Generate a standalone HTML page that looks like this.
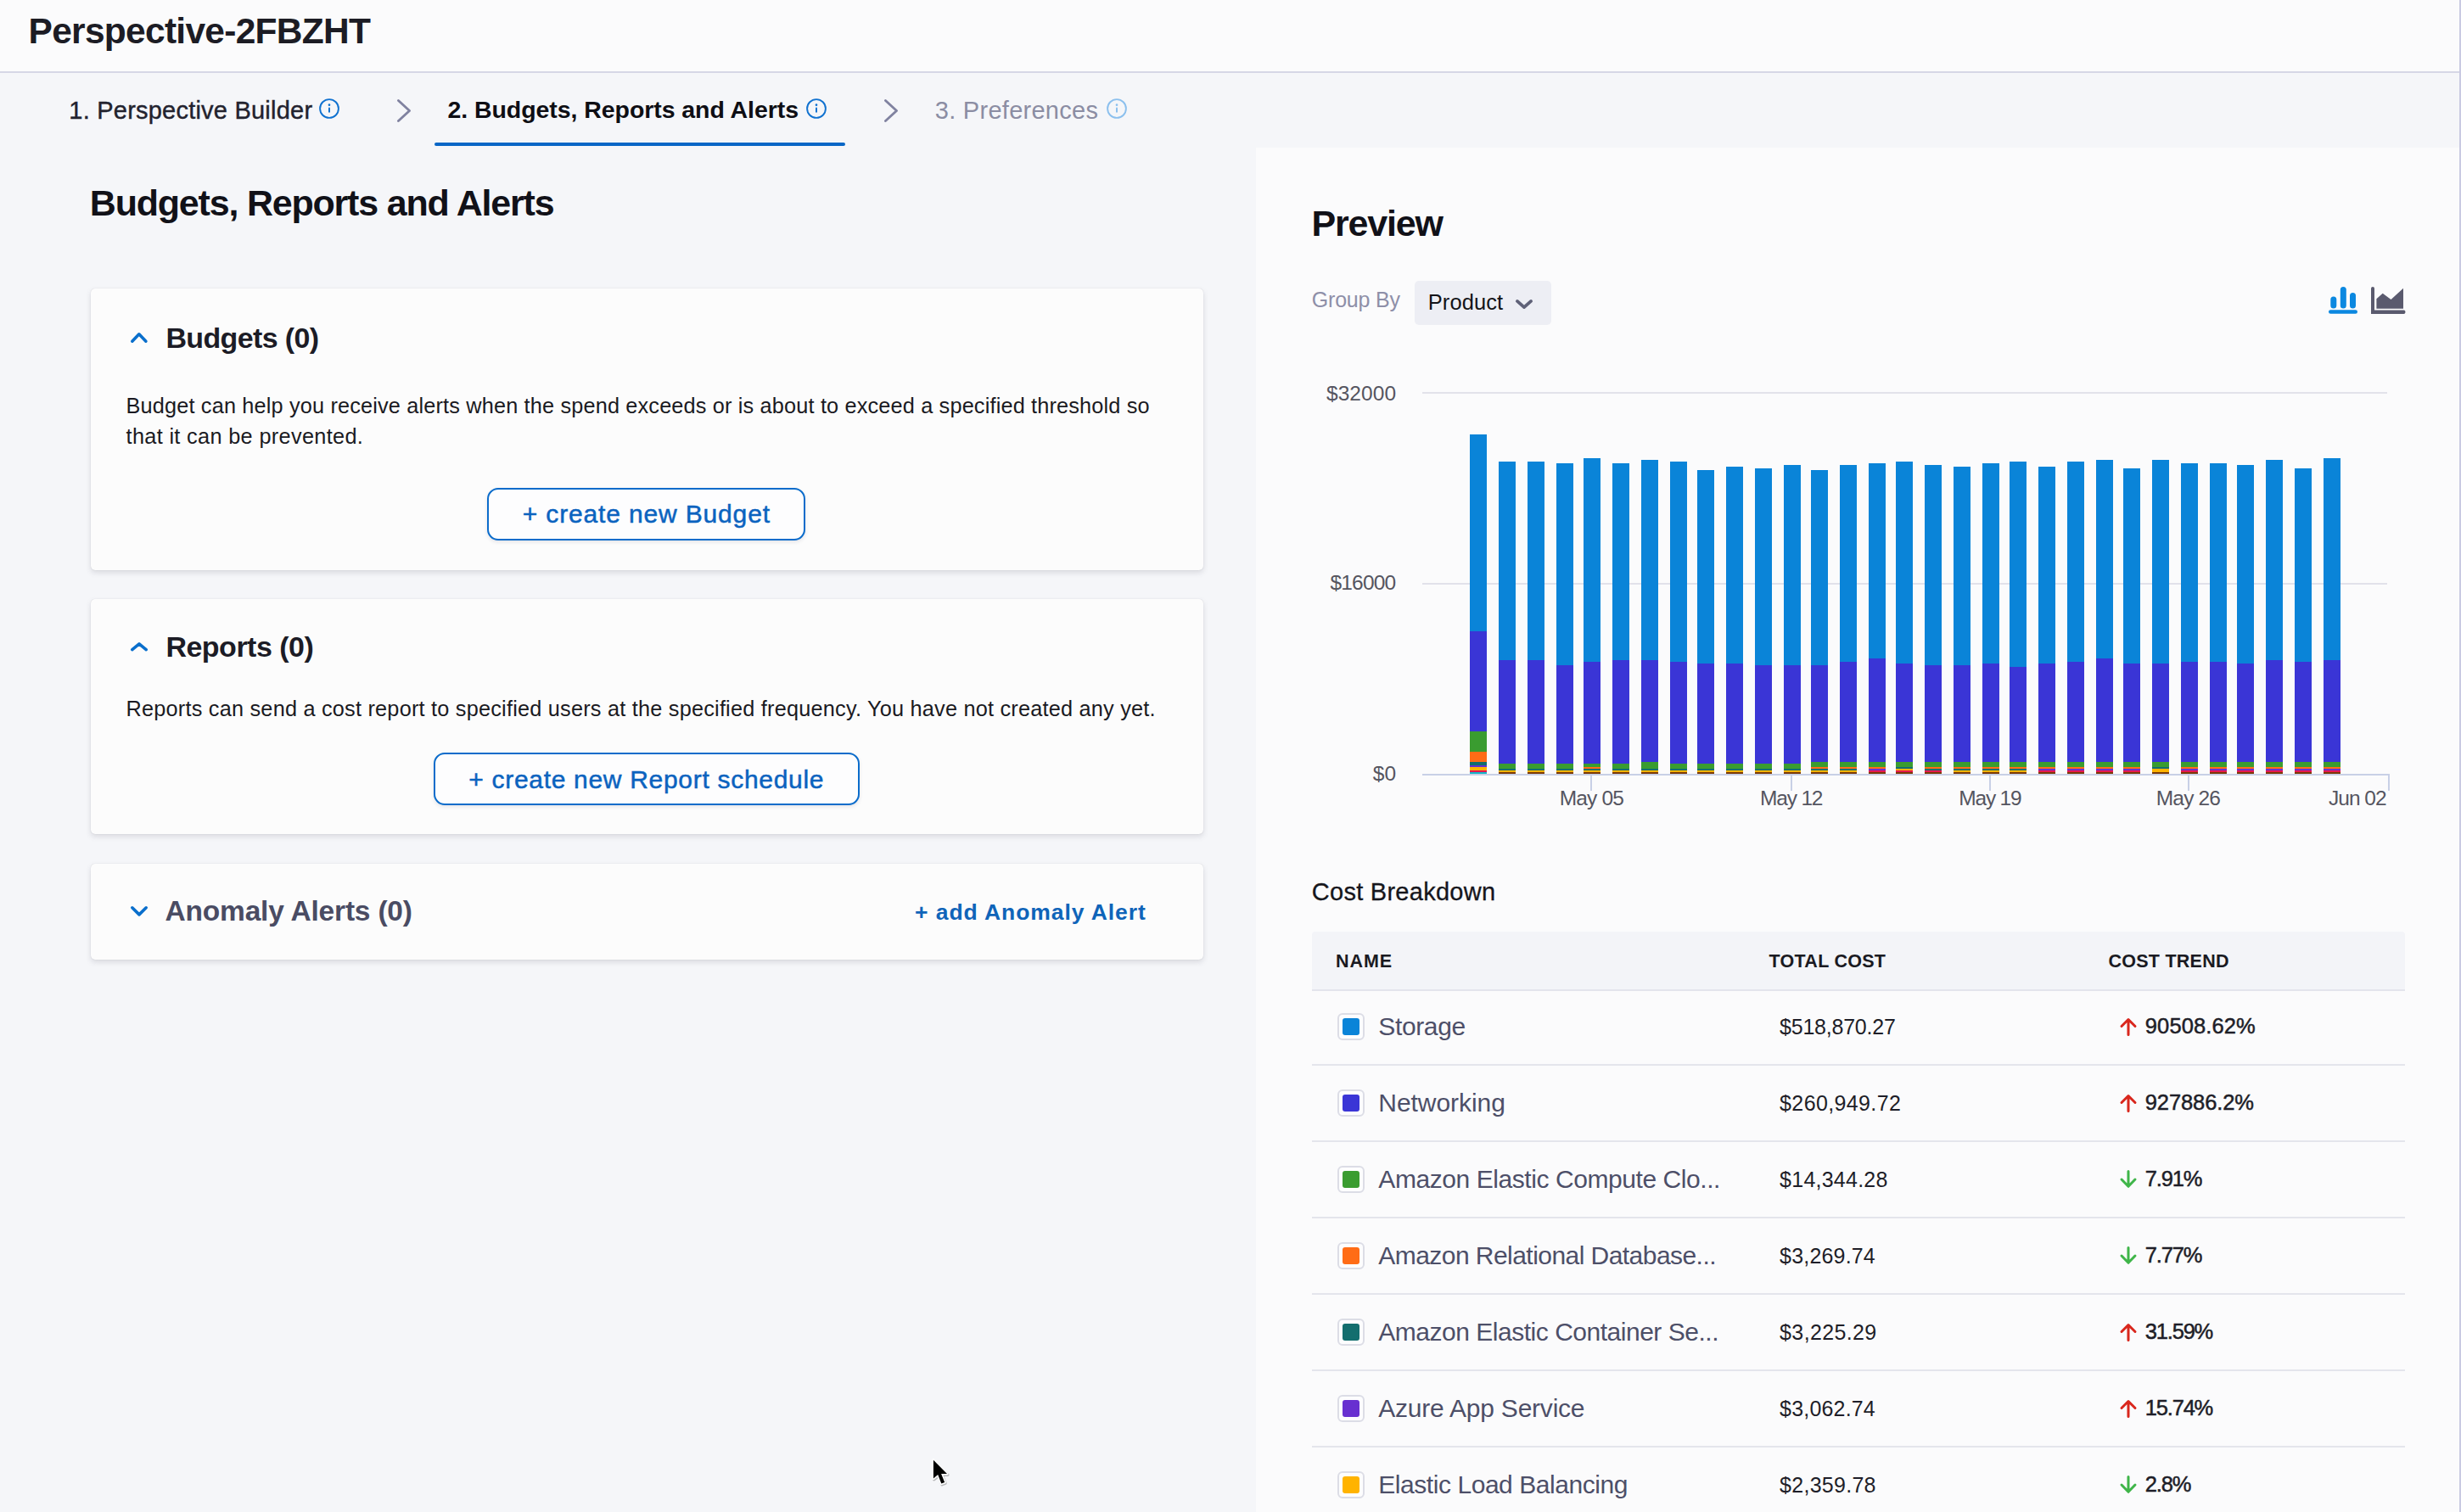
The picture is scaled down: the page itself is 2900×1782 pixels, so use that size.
<!DOCTYPE html>
<html><head><meta charset="utf-8"><title>Perspective</title>
<style>
html,body{margin:0;padding:0;}
body{width:2900px;height:1782px;overflow:hidden;position:relative;background:#f5f6f9;font-family:"Liberation Sans",sans-serif;}
.t{position:absolute;white-space:nowrap;}
.r{position:absolute;}
svg.r{overflow:visible;}
</style></head><body>
<div class="r" style="left:0px;top:0px;width:2900px;height:84px;background:#fbfbfc;"></div>
<div class="r" style="left:0px;top:84px;width:2900px;height:2px;background:#d6d7e6;"></div>
<div class="r" style="left:1480px;top:174px;width:1418px;height:1608px;background:#fbfbfc;"></div>
<div class="r" style="left:2898px;top:0px;width:2px;height:1782px;background:#c9cae2;"></div>
<div class="t" style="left:33.50px;top:9.37px;font-size:42.5px;line-height:55px;font-weight:700;color:#1c1c24;letter-spacing:-0.715px;">Perspective-2FBZHT</div>
<div class="t" style="left:81.30px;top:110.95px;font-size:29px;line-height:38px;color:#22222e;letter-spacing:0.223px;-webkit-text-stroke:0.4px #22222e;">1. Perspective Builder</div>
<div class="t" style="left:527.50px;top:111.42px;font-size:28.5px;line-height:37px;font-weight:700;color:#0e0e14;letter-spacing:-0.065px;">2. Budgets, Reports and Alerts</div>
<div class="t" style="left:1101.80px;top:110.95px;font-size:29px;line-height:38px;color:#8b8da3;letter-spacing:0.273px;">3. Preferences</div>
<svg class="r" style="left:375px;top:115px" width="26" height="26" viewBox="0 0 26 26"><circle cx="13" cy="13" r="10.9" fill="none" stroke="#1172d0" stroke-width="1.9"/><circle cx="13" cy="8.7" r="1.35" fill="#1172d0"/><rect x="12" y="11.6" width="2" height="6.2" rx="1" fill="#1172d0"/></svg>
<svg class="r" style="left:949px;top:115px" width="26" height="26" viewBox="0 0 26 26"><circle cx="13" cy="13" r="10.9" fill="none" stroke="#1172d0" stroke-width="1.9"/><circle cx="13" cy="8.7" r="1.35" fill="#1172d0"/><rect x="12" y="11.6" width="2" height="6.2" rx="1" fill="#1172d0"/></svg>
<svg class="r" style="left:1303px;top:115px" width="26" height="26" viewBox="0 0 26 26"><circle cx="13" cy="13" r="10.9" fill="none" stroke="#8cc0ee" stroke-width="1.9"/><circle cx="13" cy="8.7" r="1.35" fill="#8cc0ee"/><rect x="12" y="11.6" width="2" height="6.2" rx="1" fill="#8cc0ee"/></svg>
<svg class="r" style="left:464px;top:112.5px" width="24" height="35.0" viewBox="0 0 24 35.0"><polyline points="5.45,5.45 18.55,17.5 5.45,29.55" fill="none" stroke="#8082a0" stroke-width="2.9" stroke-linecap="round" stroke-linejoin="round"/></svg>
<svg class="r" style="left:1038px;top:112.5px" width="24" height="35.0" viewBox="0 0 24 35.0"><polyline points="5.45,5.45 18.55,17.5 5.45,29.55" fill="none" stroke="#8082a0" stroke-width="2.9" stroke-linecap="round" stroke-linejoin="round"/></svg>
<div class="r" style="left:512px;top:168px;width:484px;height:4px;background:#0866c6;border-radius:2px;"></div>
<div class="t" style="left:105.80px;top:210.79px;font-size:43px;line-height:56px;font-weight:700;color:#111118;letter-spacing:-1.200px;">Budgets, Reports and Alerts</div>
<div class="r" style="left:107px;top:340px;width:1311px;height:332px;background:#fcfcfc;border-radius:5px;box-shadow:0 0 1px rgba(40,41,61,0.2),0 3px 6px rgba(96,97,112,0.18);"></div>
<div class="r" style="left:107px;top:706px;width:1311px;height:277px;background:#fcfcfc;border-radius:5px;box-shadow:0 0 1px rgba(40,41,61,0.2),0 3px 6px rgba(96,97,112,0.18);"></div>
<div class="r" style="left:107px;top:1018px;width:1311px;height:113px;background:#fcfcfc;border-radius:5px;box-shadow:0 0 1px rgba(40,41,61,0.2),0 3px 6px rgba(96,97,112,0.18);"></div>
<svg class="r" style="left:150.3px;top:388px" width="27.69999999999999" height="20" viewBox="0 0 27.69999999999999 20"><polyline points="5.8,14.2 13.849999999999994,5.8 21.899999999999988,14.2" fill="none" stroke="#0a6fcc" stroke-width="3.6" stroke-linecap="round" stroke-linejoin="round"/></svg>
<div class="t" style="left:195.40px;top:376.11px;font-size:34px;line-height:44px;font-weight:700;color:#1c1c26;letter-spacing:-0.630px;">Budgets (0)</div>
<div class="t" style="left:148.55px;top:462.33px;font-size:25.3px;line-height:33px;color:#1a1a22;letter-spacing:0.159px;">Budget can help you receive alerts when the spend exceeds or is about to exceed a specified threshold so</div>
<div class="t" style="left:148.55px;top:498.13px;font-size:25.3px;line-height:33px;color:#1a1a22;letter-spacing:0.33px;">that it can be prevented.</div>
<div class="r" style="left:574px;top:575px;width:375px;height:62px;background:#fdfdfe;box-sizing:border-box;border:2px solid #0b6ccb;border-radius:13px;box-shadow:0 2px 4px rgba(60,60,90,0.12);"></div>
<div class="t" style="left:615.80px;top:586.10px;font-size:30px;line-height:39px;color:#0b63bf;letter-spacing:0.844px;-webkit-text-stroke:0.5px #0b63bf;">+ create new Budget</div>
<svg class="r" style="left:150px;top:753px" width="28" height="18.5" viewBox="0 0 28 18.5"><polyline points="5.8,12.7 14.0,5.8 22.2,12.7" fill="none" stroke="#0a6fcc" stroke-width="3.6" stroke-linecap="round" stroke-linejoin="round"/></svg>
<div class="t" style="left:195.40px;top:739.81px;font-size:34px;line-height:44px;font-weight:700;color:#1c1c26;letter-spacing:-0.502px;">Reports (0)</div>
<div class="t" style="left:148.55px;top:818.73px;font-size:25.3px;line-height:33px;color:#1a1a22;letter-spacing:0.212px;">Reports can send a cost report to specified users at the specified frequency. You have not created any yet.</div>
<div class="r" style="left:511px;top:887px;width:502px;height:62px;background:#fdfdfe;box-sizing:border-box;border:2px solid #0b6ccb;border-radius:13px;box-shadow:0 2px 4px rgba(60,60,90,0.12);"></div>
<div class="t" style="left:552.30px;top:899.10px;font-size:30px;line-height:39px;color:#0b63bf;letter-spacing:0.694px;-webkit-text-stroke:0.5px #0b63bf;">+ create new Report schedule</div>
<svg class="r" style="left:150px;top:1064.3px" width="28" height="19.700000000000045" viewBox="0 0 28 19.700000000000045"><polyline points="5.8,5.8 14.0,13.900000000000045 22.2,5.8" fill="none" stroke="#0a6fcc" stroke-width="3.6" stroke-linecap="round" stroke-linejoin="round"/></svg>
<div class="t" style="left:194.50px;top:1051.89px;font-size:33.5px;line-height:44px;font-weight:700;color:#4a4c63;letter-spacing:-0.194px;">Anomaly Alerts (0)</div>
<div class="t" style="left:1078.10px;top:1057.71px;font-size:26.5px;line-height:34px;font-weight:700;color:#0f64b9;letter-spacing:0.930px;">+ add Anomaly Alert</div>
<div class="t" style="left:1545.50px;top:234.89px;font-size:43px;line-height:56px;font-weight:700;color:#111118;letter-spacing:-1.200px;">Preview</div>
<div class="t" style="left:1545.80px;top:337.03px;font-size:25px;line-height:32px;color:#8e8fa8;letter-spacing:-0.204px;">Group By</div>
<div class="r" style="left:1667px;top:331px;width:161px;height:52px;background:#edeef4;border-radius:5px;"></div>
<div class="t" style="left:1682.80px;top:340.26px;font-size:25.5px;line-height:33px;color:#141418;letter-spacing:0.059px;">Product</div>
<svg class="r" style="left:1782px;top:348.5px" width="28" height="19.0" viewBox="0 0 28 19.0"><polyline points="5.9,5.9 14.0,13.1 22.1,5.9" fill="none" stroke="#5f6178" stroke-width="3.8" stroke-linecap="round" stroke-linejoin="round"/></svg>
<svg class="r" style="left:2740px;top:334px" width="100" height="40" viewBox="2740 334 100 40"><rect x="2746.3" y="349.4" width="7" height="14" rx="3.5" fill="#0b88e0"/><rect x="2757.8" y="338" width="7" height="25.4" rx="3.5" fill="#0b88e0"/><rect x="2769" y="345" width="7" height="18.4" rx="3.5" fill="#0b88e0"/><rect x="2744" y="365.2" width="34" height="4.6" rx="2.3" fill="#0b88e0"/><path d="M2794 340 Q2794 338 2796 338 Q2798 338 2798 340 L2798 365.6 L2832.5 365.6 Q2834.5 365.6 2834.5 367.8 Q2834.5 370 2832.5 370 L2794 370 Z" fill="#5a5a6e"/><path d="M2800.4 352.3 L2807.7 345.8 L2817.5 353 L2832 339.7 L2832 363.7 L2800.4 363.7 Z" fill="#5a5a6e"/></svg>
<div class="t" style="left:1563.00px;top:447.51px;font-size:24.5px;line-height:32px;color:#555560;letter-spacing:0.059px;">$32000</div>
<div class="t" style="left:1567.60px;top:671.41px;font-size:24.5px;line-height:32px;color:#555560;letter-spacing:-0.861px;">$16000</div>
<div class="t" style="left:1617.81px;top:895.51px;font-size:24.5px;line-height:32px;color:#555560;">$0</div>
<div class="r" style="left:1676px;top:462px;width:1137px;height:2px;background:#e2e2ea;"></div>
<div class="r" style="left:1676px;top:687px;width:1137px;height:2px;background:#e2e2ea;"></div>
<div class="r" style="left:1676px;top:912px;width:1140px;height:2px;background:#c8d0e6;"></div>
<div class="r" style="left:1874px;top:914px;width:2px;height:18px;background:#c8d0e6;"></div>
<div class="r" style="left:2110px;top:914px;width:2px;height:18px;background:#c8d0e6;"></div>
<div class="r" style="left:2344px;top:914px;width:2px;height:18px;background:#c8d0e6;"></div>
<div class="r" style="left:2578px;top:914px;width:2px;height:18px;background:#c8d0e6;"></div>
<div class="r" style="left:2814px;top:914px;width:2px;height:18px;background:#c8d0e6;"></div>
<div class="t" style="left:1837.70px;top:925.11px;font-size:24.5px;line-height:32px;color:#555560;letter-spacing:-0.832px;">May 05</div>
<div class="t" style="left:2074.10px;top:925.11px;font-size:24.5px;line-height:32px;color:#555560;letter-spacing:-1.200px;">May 12</div>
<div class="t" style="left:2308.30px;top:925.11px;font-size:24.5px;line-height:32px;color:#555560;letter-spacing:-1.200px;">May 19</div>
<div class="t" style="left:2540.80px;top:925.11px;font-size:24.5px;line-height:32px;color:#555560;letter-spacing:-0.832px;">May 26</div>
<div class="t" style="left:2744.00px;top:925.11px;font-size:24.5px;line-height:32px;color:#555560;letter-spacing:-0.984px;">Jun 02</div>
<svg class="r" style="left:1700px;top:500px" width="1100" height="420" viewBox="1700 500 1100 420" shape-rendering="crispEdges"><rect x="1732.0" y="511.8" width="20" height="232.2" fill="#0a84d8"/><rect x="1732.0" y="744.0" width="20" height="117.8" fill="#3a35d6"/><rect x="1732.0" y="861.8" width="20" height="24.2" fill="#3a9c30"/><rect x="1732.0" y="886.0" width="20" height="12.0" fill="#ff6c16"/><rect x="1732.0" y="898.0" width="20" height="4.0" fill="#136e6e"/><rect x="1732.0" y="902.0" width="20" height="2.0" fill="#6830d0"/><rect x="1732.0" y="904.0" width="20" height="4.0" fill="#ffb300"/><rect x="1732.0" y="908.0" width="20" height="2.0" fill="#e6184e"/><rect x="1732.0" y="910.0" width="20" height="2.0" fill="#15b5c8"/><rect x="1766.0" y="543.8" width="20" height="234.4" fill="#0a84d8"/><rect x="1766.0" y="778.2" width="20" height="121.3" fill="#3a35d6"/><rect x="1766.0" y="899.5" width="20" height="6.0" fill="#3a9c30"/><rect x="1766.0" y="905.5" width="20" height="2.0" fill="#136e6e"/><rect x="1766.0" y="907.5" width="20" height="2.3" fill="#ffb300"/><rect x="1766.0" y="909.8" width="20" height="2.2" fill="#7a3a08"/><rect x="1800.0" y="543.8" width="20" height="234.4" fill="#0a84d8"/><rect x="1800.0" y="778.2" width="20" height="121.3" fill="#3a35d6"/><rect x="1800.0" y="899.5" width="20" height="6.0" fill="#3a9c30"/><rect x="1800.0" y="905.5" width="20" height="2.0" fill="#136e6e"/><rect x="1800.0" y="907.5" width="20" height="2.3" fill="#ffb300"/><rect x="1800.0" y="909.8" width="20" height="2.2" fill="#7a3a08"/><rect x="1834.0" y="546.0" width="20" height="237.8" fill="#0a84d8"/><rect x="1834.0" y="783.8" width="20" height="115.7" fill="#3a35d6"/><rect x="1834.0" y="899.5" width="20" height="6.0" fill="#3a9c30"/><rect x="1834.0" y="905.5" width="20" height="2.0" fill="#136e6e"/><rect x="1834.0" y="907.5" width="20" height="2.3" fill="#ffb300"/><rect x="1834.0" y="909.8" width="20" height="2.2" fill="#7a3a08"/><rect x="1866.0" y="539.7" width="20" height="240.3" fill="#0a84d8"/><rect x="1866.0" y="780.0" width="20" height="119.5" fill="#3a35d6"/><rect x="1866.0" y="899.5" width="20" height="4.5" fill="#3a9c30"/><rect x="1866.0" y="904.0" width="20" height="1.5" fill="#ff6c16"/><rect x="1866.0" y="905.5" width="20" height="2.0" fill="#136e6e"/><rect x="1866.0" y="907.5" width="20" height="2.3" fill="#ffb300"/><rect x="1866.0" y="909.8" width="20" height="2.2" fill="#7a3a08"/><rect x="1900.0" y="546.0" width="20" height="232.2" fill="#0a84d8"/><rect x="1900.0" y="778.2" width="20" height="121.3" fill="#3a35d6"/><rect x="1900.0" y="899.5" width="20" height="6.0" fill="#3a9c30"/><rect x="1900.0" y="905.5" width="20" height="2.0" fill="#136e6e"/><rect x="1900.0" y="907.5" width="20" height="2.3" fill="#ffb300"/><rect x="1900.0" y="909.8" width="20" height="2.2" fill="#7a3a08"/><rect x="1934.0" y="541.9" width="20" height="236.3" fill="#0a84d8"/><rect x="1934.0" y="778.2" width="20" height="119.8" fill="#3a35d6"/><rect x="1934.0" y="898.0" width="20" height="7.5" fill="#3a9c30"/><rect x="1934.0" y="905.5" width="20" height="2.0" fill="#136e6e"/><rect x="1934.0" y="907.5" width="20" height="2.3" fill="#ffb300"/><rect x="1934.0" y="909.8" width="20" height="2.2" fill="#7a3a08"/><rect x="1968.0" y="543.8" width="20" height="236.2" fill="#0a84d8"/><rect x="1968.0" y="780.0" width="20" height="119.5" fill="#3a35d6"/><rect x="1968.0" y="899.5" width="20" height="6.0" fill="#3a9c30"/><rect x="1968.0" y="905.5" width="20" height="2.0" fill="#136e6e"/><rect x="1968.0" y="907.5" width="20" height="2.3" fill="#ffb300"/><rect x="1968.0" y="909.8" width="20" height="2.2" fill="#7a3a08"/><rect x="2000.0" y="554.0" width="20" height="228.2" fill="#0a84d8"/><rect x="2000.0" y="782.2" width="20" height="117.3" fill="#3a35d6"/><rect x="2000.0" y="899.5" width="20" height="6.0" fill="#3a9c30"/><rect x="2000.0" y="905.5" width="20" height="2.0" fill="#136e6e"/><rect x="2000.0" y="907.5" width="20" height="2.3" fill="#ffb300"/><rect x="2000.0" y="909.8" width="20" height="2.2" fill="#7a3a08"/><rect x="2034.0" y="550.0" width="20" height="232.2" fill="#0a84d8"/><rect x="2034.0" y="782.2" width="20" height="117.3" fill="#3a35d6"/><rect x="2034.0" y="899.5" width="20" height="6.0" fill="#3a9c30"/><rect x="2034.0" y="905.5" width="20" height="2.0" fill="#136e6e"/><rect x="2034.0" y="907.5" width="20" height="2.3" fill="#ffb300"/><rect x="2034.0" y="909.8" width="20" height="2.2" fill="#7a3a08"/><rect x="2068.0" y="551.9" width="20" height="231.9" fill="#0a84d8"/><rect x="2068.0" y="783.8" width="20" height="115.7" fill="#3a35d6"/><rect x="2068.0" y="899.5" width="20" height="6.0" fill="#3a9c30"/><rect x="2068.0" y="905.5" width="20" height="2.0" fill="#136e6e"/><rect x="2068.0" y="907.5" width="20" height="2.3" fill="#ffb300"/><rect x="2068.0" y="909.8" width="20" height="2.2" fill="#7a3a08"/><rect x="2102.0" y="547.8" width="20" height="236.0" fill="#0a84d8"/><rect x="2102.0" y="783.8" width="20" height="115.7" fill="#3a35d6"/><rect x="2102.0" y="899.5" width="20" height="6.0" fill="#3a9c30"/><rect x="2102.0" y="905.5" width="20" height="2.0" fill="#136e6e"/><rect x="2102.0" y="907.5" width="20" height="2.3" fill="#ffb300"/><rect x="2102.0" y="909.8" width="20" height="2.2" fill="#7a3a08"/><rect x="2134.0" y="554.0" width="20" height="229.8" fill="#0a84d8"/><rect x="2134.0" y="783.8" width="20" height="114.2" fill="#3a35d6"/><rect x="2134.0" y="898.0" width="20" height="6.0" fill="#3a9c30"/><rect x="2134.0" y="904.0" width="20" height="2.0" fill="#ff6c16"/><rect x="2134.0" y="906.0" width="20" height="2.0" fill="#136e6e"/><rect x="2134.0" y="908.0" width="20" height="2.0" fill="#ffb300"/><rect x="2134.0" y="910.0" width="20" height="2.0" fill="#7a3a08"/><rect x="2168.0" y="547.8" width="20" height="232.2" fill="#0a84d8"/><rect x="2168.0" y="780.0" width="20" height="118.0" fill="#3a35d6"/><rect x="2168.0" y="898.0" width="20" height="6.0" fill="#3a9c30"/><rect x="2168.0" y="904.0" width="20" height="2.0" fill="#ff6c16"/><rect x="2168.0" y="906.0" width="20" height="2.0" fill="#136e6e"/><rect x="2168.0" y="908.0" width="20" height="2.0" fill="#ffb300"/><rect x="2168.0" y="910.0" width="20" height="2.0" fill="#7a3a08"/><rect x="2202.0" y="546.0" width="20" height="230.0" fill="#0a84d8"/><rect x="2202.0" y="776.0" width="20" height="122.0" fill="#3a35d6"/><rect x="2202.0" y="898.0" width="20" height="6.0" fill="#3a9c30"/><rect x="2202.0" y="904.0" width="20" height="2.0" fill="#ff6c16"/><rect x="2202.0" y="906.0" width="20" height="2.0" fill="#6830d0"/><rect x="2202.0" y="908.0" width="20" height="2.0" fill="#e6184e"/><rect x="2202.0" y="910.0" width="20" height="2.0" fill="#7a3a08"/><rect x="2234.0" y="543.8" width="20" height="238.4" fill="#0a84d8"/><rect x="2234.0" y="782.2" width="20" height="115.8" fill="#3a35d6"/><rect x="2234.0" y="898.0" width="20" height="6.0" fill="#3a9c30"/><rect x="2234.0" y="904.0" width="20" height="2.0" fill="#136e6e"/><rect x="2234.0" y="906.0" width="20" height="2.0" fill="#ffb300"/><rect x="2234.0" y="908.0" width="20" height="2.0" fill="#e6184e"/><rect x="2234.0" y="910.0" width="20" height="2.0" fill="#7a3a08"/><rect x="2268.0" y="547.8" width="20" height="236.0" fill="#0a84d8"/><rect x="2268.0" y="783.8" width="20" height="114.2" fill="#3a35d6"/><rect x="2268.0" y="898.0" width="20" height="6.0" fill="#3a9c30"/><rect x="2268.0" y="904.0" width="20" height="2.0" fill="#ff6c16"/><rect x="2268.0" y="906.0" width="20" height="2.0" fill="#136e6e"/><rect x="2268.0" y="908.0" width="20" height="2.0" fill="#e6184e"/><rect x="2268.0" y="910.0" width="20" height="2.0" fill="#7a3a08"/><rect x="2302.0" y="550.0" width="20" height="233.8" fill="#0a84d8"/><rect x="2302.0" y="783.8" width="20" height="114.2" fill="#3a35d6"/><rect x="2302.0" y="898.0" width="20" height="6.0" fill="#3a9c30"/><rect x="2302.0" y="904.0" width="20" height="2.0" fill="#ff6c16"/><rect x="2302.0" y="906.0" width="20" height="2.0" fill="#136e6e"/><rect x="2302.0" y="908.0" width="20" height="2.0" fill="#ffb300"/><rect x="2302.0" y="910.0" width="20" height="2.0" fill="#7a3a08"/><rect x="2336.0" y="546.0" width="20" height="236.2" fill="#0a84d8"/><rect x="2336.0" y="782.2" width="20" height="115.8" fill="#3a35d6"/><rect x="2336.0" y="898.0" width="20" height="6.0" fill="#3a9c30"/><rect x="2336.0" y="904.0" width="20" height="2.0" fill="#ff6c16"/><rect x="2336.0" y="906.0" width="20" height="2.0" fill="#136e6e"/><rect x="2336.0" y="908.0" width="20" height="2.0" fill="#ffb300"/><rect x="2336.0" y="910.0" width="20" height="2.0" fill="#7a3a08"/><rect x="2368.0" y="543.8" width="20" height="242.2" fill="#0a84d8"/><rect x="2368.0" y="786.0" width="20" height="112.0" fill="#3a35d6"/><rect x="2368.0" y="898.0" width="20" height="6.0" fill="#3a9c30"/><rect x="2368.0" y="904.0" width="20" height="2.0" fill="#ff6c16"/><rect x="2368.0" y="906.0" width="20" height="2.0" fill="#136e6e"/><rect x="2368.0" y="908.0" width="20" height="2.0" fill="#ffb300"/><rect x="2368.0" y="910.0" width="20" height="2.0" fill="#7a3a08"/><rect x="2402.0" y="550.0" width="20" height="232.2" fill="#0a84d8"/><rect x="2402.0" y="782.2" width="20" height="115.8" fill="#3a35d6"/><rect x="2402.0" y="898.0" width="20" height="6.0" fill="#3a9c30"/><rect x="2402.0" y="904.0" width="20" height="2.0" fill="#ff6c16"/><rect x="2402.0" y="906.0" width="20" height="2.0" fill="#6830d0"/><rect x="2402.0" y="908.0" width="20" height="2.0" fill="#e6184e"/><rect x="2402.0" y="910.0" width="20" height="2.0" fill="#7a3a08"/><rect x="2436.0" y="543.8" width="20" height="236.2" fill="#0a84d8"/><rect x="2436.0" y="780.0" width="20" height="118.0" fill="#3a35d6"/><rect x="2436.0" y="898.0" width="20" height="6.0" fill="#3a9c30"/><rect x="2436.0" y="904.0" width="20" height="2.0" fill="#ff6c16"/><rect x="2436.0" y="906.0" width="20" height="2.0" fill="#6830d0"/><rect x="2436.0" y="908.0" width="20" height="2.0" fill="#e6184e"/><rect x="2436.0" y="910.0" width="20" height="2.0" fill="#7a3a08"/><rect x="2470.0" y="541.9" width="20" height="234.1" fill="#0a84d8"/><rect x="2470.0" y="776.0" width="20" height="122.0" fill="#3a35d6"/><rect x="2470.0" y="898.0" width="20" height="6.0" fill="#3a9c30"/><rect x="2470.0" y="904.0" width="20" height="2.0" fill="#ff6c16"/><rect x="2470.0" y="906.0" width="20" height="2.0" fill="#6830d0"/><rect x="2470.0" y="908.0" width="20" height="2.0" fill="#e6184e"/><rect x="2470.0" y="910.0" width="20" height="2.0" fill="#7a3a08"/><rect x="2502.0" y="551.9" width="20" height="230.3" fill="#0a84d8"/><rect x="2502.0" y="782.2" width="20" height="115.8" fill="#3a35d6"/><rect x="2502.0" y="898.0" width="20" height="6.0" fill="#3a9c30"/><rect x="2502.0" y="904.0" width="20" height="2.0" fill="#ff6c16"/><rect x="2502.0" y="906.0" width="20" height="2.0" fill="#6830d0"/><rect x="2502.0" y="908.0" width="20" height="2.0" fill="#e6184e"/><rect x="2502.0" y="910.0" width="20" height="2.0" fill="#7a3a08"/><rect x="2536.0" y="541.9" width="20" height="240.3" fill="#0a84d8"/><rect x="2536.0" y="782.2" width="20" height="115.8" fill="#3a35d6"/><rect x="2536.0" y="898.0" width="20" height="6.0" fill="#3a9c30"/><rect x="2536.0" y="904.0" width="20" height="2.0" fill="#136e6e"/><rect x="2536.0" y="906.0" width="20" height="2.0" fill="#ffb300"/><rect x="2536.0" y="908.0" width="20" height="2.0" fill="#ffb300"/><rect x="2536.0" y="910.0" width="20" height="2.0" fill="#7a3a08"/><rect x="2570.0" y="546.0" width="20" height="234.0" fill="#0a84d8"/><rect x="2570.0" y="780.0" width="20" height="118.0" fill="#3a35d6"/><rect x="2570.0" y="898.0" width="20" height="6.0" fill="#3a9c30"/><rect x="2570.0" y="904.0" width="20" height="2.0" fill="#ff6c16"/><rect x="2570.0" y="906.0" width="20" height="2.0" fill="#6830d0"/><rect x="2570.0" y="908.0" width="20" height="2.0" fill="#e6184e"/><rect x="2570.0" y="910.0" width="20" height="2.0" fill="#7a3a08"/><rect x="2604.0" y="546.0" width="20" height="234.0" fill="#0a84d8"/><rect x="2604.0" y="780.0" width="20" height="118.0" fill="#3a35d6"/><rect x="2604.0" y="898.0" width="20" height="6.0" fill="#3a9c30"/><rect x="2604.0" y="904.0" width="20" height="2.0" fill="#ff6c16"/><rect x="2604.0" y="906.0" width="20" height="2.0" fill="#6830d0"/><rect x="2604.0" y="908.0" width="20" height="2.0" fill="#e6184e"/><rect x="2604.0" y="910.0" width="20" height="2.0" fill="#7a3a08"/><rect x="2636.0" y="547.8" width="20" height="234.4" fill="#0a84d8"/><rect x="2636.0" y="782.2" width="20" height="115.8" fill="#3a35d6"/><rect x="2636.0" y="898.0" width="20" height="6.0" fill="#3a9c30"/><rect x="2636.0" y="904.0" width="20" height="2.0" fill="#ff6c16"/><rect x="2636.0" y="906.0" width="20" height="2.0" fill="#6830d0"/><rect x="2636.0" y="908.0" width="20" height="2.0" fill="#e6184e"/><rect x="2636.0" y="910.0" width="20" height="2.0" fill="#7a3a08"/><rect x="2670.0" y="541.9" width="20" height="236.3" fill="#0a84d8"/><rect x="2670.0" y="778.2" width="20" height="119.8" fill="#3a35d6"/><rect x="2670.0" y="898.0" width="20" height="6.0" fill="#3a9c30"/><rect x="2670.0" y="904.0" width="20" height="2.0" fill="#ff6c16"/><rect x="2670.0" y="906.0" width="20" height="2.0" fill="#6830d0"/><rect x="2670.0" y="908.0" width="20" height="2.0" fill="#e6184e"/><rect x="2670.0" y="910.0" width="20" height="2.0" fill="#7a3a08"/><rect x="2704.0" y="551.9" width="20" height="228.1" fill="#0a84d8"/><rect x="2704.0" y="780.0" width="20" height="118.0" fill="#3a35d6"/><rect x="2704.0" y="898.0" width="20" height="6.0" fill="#3a9c30"/><rect x="2704.0" y="904.0" width="20" height="2.0" fill="#ff6c16"/><rect x="2704.0" y="906.0" width="20" height="2.0" fill="#6830d0"/><rect x="2704.0" y="908.0" width="20" height="2.0" fill="#e6184e"/><rect x="2704.0" y="910.0" width="20" height="2.0" fill="#7a3a08"/><rect x="2738.0" y="539.7" width="20" height="238.5" fill="#0a84d8"/><rect x="2738.0" y="778.2" width="20" height="119.8" fill="#3a35d6"/><rect x="2738.0" y="898.0" width="20" height="6.0" fill="#3a9c30"/><rect x="2738.0" y="904.0" width="20" height="2.0" fill="#ff6c16"/><rect x="2738.0" y="906.0" width="20" height="2.0" fill="#6830d0"/><rect x="2738.0" y="908.0" width="20" height="2.0" fill="#e6184e"/><rect x="2738.0" y="910.0" width="20" height="2.0" fill="#7a3a08"/></svg>
<div class="t" style="left:1545.80px;top:1031.55px;font-size:29px;line-height:38px;color:#16161c;letter-spacing:0.268px;-webkit-text-stroke:0.3px #16161c;">Cost Breakdown</div>
<div class="r" style="left:1546px;top:1098px;width:1288px;height:68px;background:#f3f4f8;border-radius:4px 4px 0 0;"></div>
<div class="r" style="left:1546px;top:1166px;width:1288px;height:2px;background:#e3e4ec;"></div>
<div class="t" style="left:1574.10px;top:1118.55px;font-size:21.5px;line-height:28px;font-weight:700;color:#1a1a22;letter-spacing:0.927px;">NAME</div>
<div class="t" style="left:2084.50px;top:1118.55px;font-size:21.5px;line-height:28px;font-weight:700;color:#1a1a22;letter-spacing:0.276px;">TOTAL COST</div>
<div class="t" style="left:2484.50px;top:1118.55px;font-size:21.5px;line-height:28px;font-weight:700;color:#1a1a22;letter-spacing:0.250px;">COST TREND</div>
<div class="r" style="left:1546px;top:1254px;width:1288px;height:2px;background:#e4e5ec;"></div>
<div class="r" style="left:1576px;top:1194px;width:32px;height:32px;background:#fdfdfe;box-sizing:border-box;border:2px solid #dcdde6;border-radius:6px;"></div>
<div class="r" style="left:1582px;top:1200px;width:20px;height:20px;background:#0a84d8;border-radius:3px;"></div>
<div class="t" style="left:1624.30px;top:1189.90px;font-size:30px;line-height:39px;color:#4d4f68;letter-spacing:-0.375px;">Storage</div>
<div class="t" style="left:2097.10px;top:1194.13px;font-size:25px;line-height:32px;color:#1e1e28;letter-spacing:-0.230px;">$518,870.27</div>
<svg class="r" style="left:2497px;top:1199px" width="22" height="22" viewBox="0 0 22 22"><path d="M11 20.5 L11 3 M3 10.5 L11 2.5 L19 10.5" fill="none" stroke="#d9271d" stroke-width="3" stroke-linecap="round" stroke-linejoin="round"/></svg>
<div class="t" style="left:2527.80px;top:1192.66px;font-size:25.5px;line-height:33px;color:#1e1e28;letter-spacing:0.109px;-webkit-text-stroke:0.5px #1e1e28;">90508.62%</div>
<div class="r" style="left:1546px;top:1344px;width:1288px;height:2px;background:#e4e5ec;"></div>
<div class="r" style="left:1576px;top:1284px;width:32px;height:32px;background:#fdfdfe;box-sizing:border-box;border:2px solid #dcdde6;border-radius:6px;"></div>
<div class="r" style="left:1582px;top:1290px;width:20px;height:20px;background:#3a35d6;border-radius:3px;"></div>
<div class="t" style="left:1624.30px;top:1279.90px;font-size:30px;line-height:39px;color:#4d4f68;letter-spacing:-0.056px;">Networking</div>
<div class="t" style="left:2097.10px;top:1284.13px;font-size:25px;line-height:32px;color:#1e1e28;letter-spacing:0.370px;">$260,949.72</div>
<svg class="r" style="left:2497px;top:1289px" width="22" height="22" viewBox="0 0 22 22"><path d="M11 20.5 L11 3 M3 10.5 L11 2.5 L19 10.5" fill="none" stroke="#d9271d" stroke-width="3" stroke-linecap="round" stroke-linejoin="round"/></svg>
<div class="t" style="left:2527.80px;top:1282.66px;font-size:25.5px;line-height:33px;color:#1e1e28;letter-spacing:-0.104px;-webkit-text-stroke:0.5px #1e1e28;">927886.2%</div>
<div class="r" style="left:1546px;top:1434px;width:1288px;height:2px;background:#e4e5ec;"></div>
<div class="r" style="left:1576px;top:1374px;width:32px;height:32px;background:#fdfdfe;box-sizing:border-box;border:2px solid #dcdde6;border-radius:6px;"></div>
<div class="r" style="left:1582px;top:1380px;width:20px;height:20px;background:#3a9c30;border-radius:3px;"></div>
<div class="t" style="left:1624.30px;top:1369.90px;font-size:30px;line-height:39px;color:#4d4f68;letter-spacing:-0.429px;">Amazon Elastic Compute Clo...</div>
<div class="t" style="left:2097.10px;top:1374.13px;font-size:25px;line-height:32px;color:#1e1e28;letter-spacing:0.242px;">$14,344.28</div>
<svg class="r" style="left:2497px;top:1379px" width="22" height="22" viewBox="0 0 22 22"><path d="M11 1.5 L11 19 M3 11 L11 19.3 L19 11" fill="none" stroke="#3fb549" stroke-width="3" stroke-linecap="round" stroke-linejoin="round"/></svg>
<div class="t" style="left:2527.80px;top:1372.66px;font-size:25.5px;line-height:33px;color:#1e1e28;letter-spacing:-1.200px;-webkit-text-stroke:0.5px #1e1e28;">7.91%</div>
<div class="r" style="left:1546px;top:1524px;width:1288px;height:2px;background:#e4e5ec;"></div>
<div class="r" style="left:1576px;top:1464px;width:32px;height:32px;background:#fdfdfe;box-sizing:border-box;border:2px solid #dcdde6;border-radius:6px;"></div>
<div class="r" style="left:1582px;top:1470px;width:20px;height:20px;background:#ff6c16;border-radius:3px;"></div>
<div class="t" style="left:1624.30px;top:1459.90px;font-size:30px;line-height:39px;color:#4d4f68;letter-spacing:-0.548px;">Amazon Relational Database...</div>
<div class="t" style="left:2097.10px;top:1464.13px;font-size:25px;line-height:32px;color:#1e1e28;letter-spacing:0.181px;">$3,269.74</div>
<svg class="r" style="left:2497px;top:1469px" width="22" height="22" viewBox="0 0 22 22"><path d="M11 1.5 L11 19 M3 11 L11 19.3 L19 11" fill="none" stroke="#3fb549" stroke-width="3" stroke-linecap="round" stroke-linejoin="round"/></svg>
<div class="t" style="left:2527.80px;top:1462.66px;font-size:25.5px;line-height:33px;color:#1e1e28;letter-spacing:-1.200px;-webkit-text-stroke:0.5px #1e1e28;">7.77%</div>
<div class="r" style="left:1546px;top:1614px;width:1288px;height:2px;background:#e4e5ec;"></div>
<div class="r" style="left:1576px;top:1554px;width:32px;height:32px;background:#fdfdfe;box-sizing:border-box;border:2px solid #dcdde6;border-radius:6px;"></div>
<div class="r" style="left:1582px;top:1560px;width:20px;height:20px;background:#136e6e;border-radius:3px;"></div>
<div class="t" style="left:1624.30px;top:1549.90px;font-size:30px;line-height:39px;color:#4d4f68;letter-spacing:-0.483px;">Amazon Elastic Container Se...</div>
<div class="t" style="left:2097.10px;top:1554.13px;font-size:25px;line-height:32px;color:#1e1e28;letter-spacing:0.369px;">$3,225.29</div>
<svg class="r" style="left:2497px;top:1559px" width="22" height="22" viewBox="0 0 22 22"><path d="M11 20.5 L11 3 M3 10.5 L11 2.5 L19 10.5" fill="none" stroke="#d9271d" stroke-width="3" stroke-linecap="round" stroke-linejoin="round"/></svg>
<div class="t" style="left:2527.80px;top:1552.66px;font-size:25.5px;line-height:33px;color:#1e1e28;letter-spacing:-1.200px;-webkit-text-stroke:0.5px #1e1e28;">31.59%</div>
<div class="r" style="left:1546px;top:1704px;width:1288px;height:2px;background:#e4e5ec;"></div>
<div class="r" style="left:1576px;top:1644px;width:32px;height:32px;background:#fdfdfe;box-sizing:border-box;border:2px solid #dcdde6;border-radius:6px;"></div>
<div class="r" style="left:1582px;top:1650px;width:20px;height:20px;background:#6830d0;border-radius:3px;"></div>
<div class="t" style="left:1624.30px;top:1639.90px;font-size:30px;line-height:39px;color:#4d4f68;letter-spacing:-0.222px;">Azure App Service</div>
<div class="t" style="left:2097.10px;top:1644.13px;font-size:25px;line-height:32px;color:#1e1e28;letter-spacing:0.181px;">$3,062.74</div>
<svg class="r" style="left:2497px;top:1649px" width="22" height="22" viewBox="0 0 22 22"><path d="M11 20.5 L11 3 M3 10.5 L11 2.5 L19 10.5" fill="none" stroke="#d9271d" stroke-width="3" stroke-linecap="round" stroke-linejoin="round"/></svg>
<div class="t" style="left:2527.80px;top:1642.66px;font-size:25.5px;line-height:33px;color:#1e1e28;letter-spacing:-1.200px;-webkit-text-stroke:0.5px #1e1e28;">15.74%</div>
<div class="r" style="left:1546px;top:1794px;width:1288px;height:2px;background:#e4e5ec;"></div>
<div class="r" style="left:1576px;top:1734px;width:32px;height:32px;background:#fdfdfe;box-sizing:border-box;border:2px solid #dcdde6;border-radius:6px;"></div>
<div class="r" style="left:1582px;top:1740px;width:20px;height:20px;background:#ffb300;border-radius:3px;"></div>
<div class="t" style="left:1624.30px;top:1729.90px;font-size:30px;line-height:39px;color:#4d4f68;letter-spacing:-0.448px;">Elastic Load Balancing</div>
<div class="t" style="left:2097.10px;top:1734.13px;font-size:25px;line-height:32px;color:#1e1e28;letter-spacing:0.269px;">$2,359.78</div>
<svg class="r" style="left:2497px;top:1739px" width="22" height="22" viewBox="0 0 22 22"><path d="M11 1.5 L11 19 M3 11 L11 19.3 L19 11" fill="none" stroke="#3fb549" stroke-width="3" stroke-linecap="round" stroke-linejoin="round"/></svg>
<div class="t" style="left:2527.80px;top:1732.66px;font-size:25.5px;line-height:33px;color:#1e1e28;letter-spacing:-1.200px;-webkit-text-stroke:0.5px #1e1e28;">2.8%</div>
<svg class="r" style="left:1090px;top:1712px" width="36" height="46" viewBox="1090 1712 36 46"><path d="M1099.9 1720.7 L1099.9 1742.6 L1105.2 1738 L1109.3 1748.5 L1113.2 1747 L1109.1 1737 L1116 1737 Z" transform="translate(0.8,1.2)" fill="none" stroke="rgba(0,0,0,0.25)" stroke-width="3.5" stroke-linejoin="round"/><path d="M1099.9 1720.7 L1099.9 1742.6 L1105.2 1738 L1109.3 1748.5 L1113.2 1747 L1109.1 1737 L1116 1737 Z" fill="#fff" stroke="#fff" stroke-width="3.2" stroke-linejoin="round"/><path d="M1099.9 1720.7 L1099.9 1742.6 L1105.2 1738 L1109.3 1748.5 L1113.2 1747 L1109.1 1737 L1116 1737 Z" fill="#000"/></svg>
</body></html>
